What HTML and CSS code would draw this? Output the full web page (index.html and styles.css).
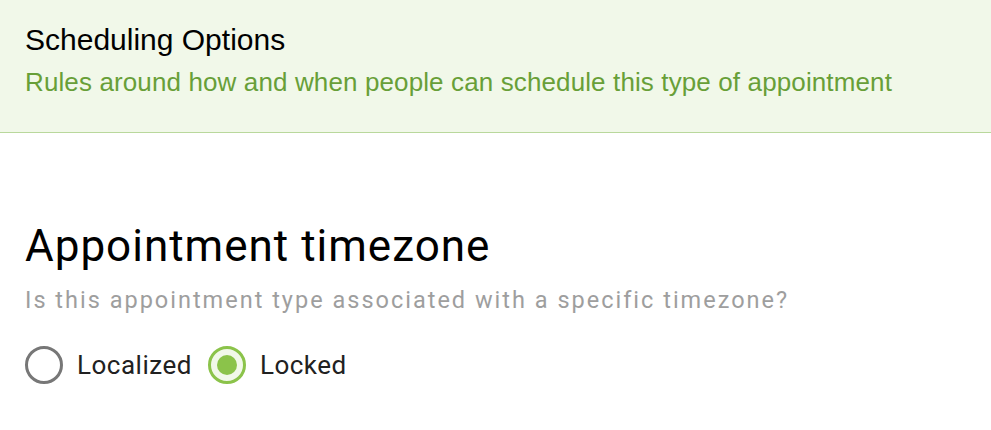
FILE: index.html
```html
<!DOCTYPE html>
<html lang="en">
<head>
<meta charset="utf-8">
<title>Scheduling Options</title>
<link rel="stylesheet" href="styles.css">
</head>
<body>
<header class="panel-header">
  <h1 class="panel-title">Scheduling Options</h1>
  <p class="panel-subtitle">Rules around how and when people can schedule this type of appointment</p>
</header>
<main class="panel-body">
  <section class="setting">
    <h2 class="setting-title">Appointment timezone</h2>
    <p class="setting-help">Is this appointment type associated with a specific timezone?</p>
    <div class="radio-group">
      <label class="radio">
        <span class="radio-circle"></span>
        <span class="radio-label">Localized</span>
      </label>
      <label class="radio radio-checked">
        <span class="radio-circle"><span class="radio-dot"></span></span>
        <span class="radio-label">Locked</span>
      </label>
    </div>
  </section>
</main>
</body>
</html>
```
FILE: styles.css
```css
html, body {
  margin: 0;
  padding: 0;
  background: #ffffff;
}

.panel-header {
  background: #f1f8e9;
  border-bottom: 1px solid #b9d89c;
  padding: 25px 25px 37px;
  font-family: "Liberation Sans", Arial, sans-serif;
}

.panel-title {
  margin: 0;
  font-size: 30px;
  line-height: 30px;
  font-weight: normal;
  color: #000000;
}

.panel-subtitle {
  margin: 14px 0 0;
  font-size: 26px;
  line-height: 26px;
  letter-spacing: 0.12px;
  color: #689f38;
}

.panel-body {
  padding: 91px 25px 0;
  font-family: Roboto, "Noto Sans", sans-serif;
}

.setting-title {
  margin: 0;
  font-size: 44px;
  line-height: 44px;
  font-weight: normal;
  letter-spacing: 1px;
  color: #000000;
}

.setting-help {
  margin: 21px 0 0;
  font-size: 23.5px;
  line-height: 23px;
  color: #9e9e9e;
  letter-spacing: 2px;
}

.radio-group {
  display: flex;
  align-items: center;
  gap: 16px;
  margin-top: 34px;
}

.radio {
  display: flex;
  align-items: center;
  gap: 14px;
}

.radio-circle {
  box-sizing: border-box;
  width: 38px;
  height: 38px;
  border-radius: 50%;
  border: 3px solid #777777;
  display: flex;
  align-items: center;
  justify-content: center;
}

.radio-checked .radio-circle {
  border-color: #8bc34a;
  background: #f1f8e9;
}

.radio-dot {
  width: 20px;
  height: 20px;
  border-radius: 50%;
  background: #8bc34a;
}

.radio-label {
  font-size: 26px;
  line-height: 26px;
  letter-spacing: 0.5px;
  color: #212121;
}
```
